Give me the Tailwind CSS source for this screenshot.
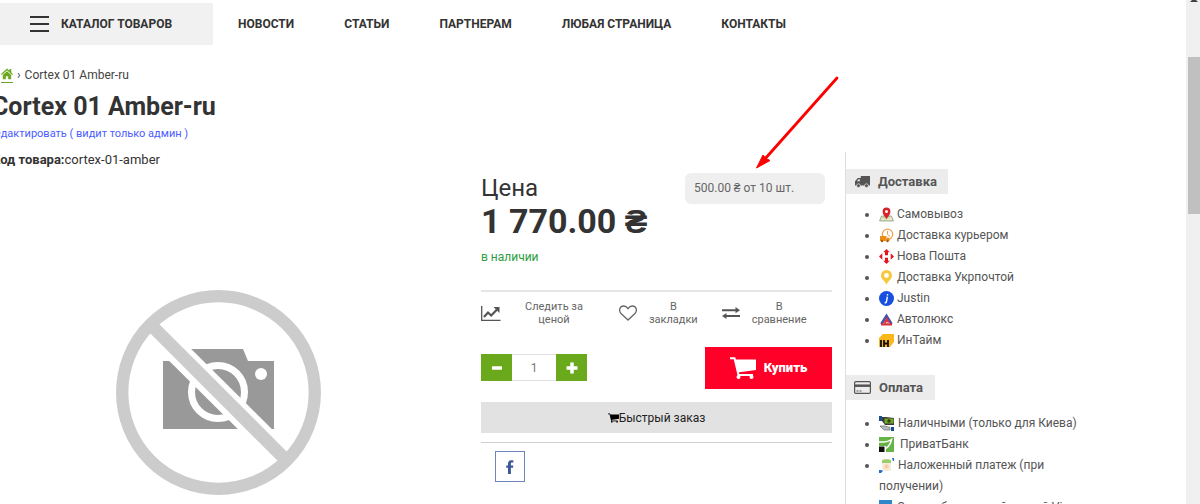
<!DOCTYPE html>
<html lang="ru">
  <head>
    <meta charset="UTF-8" />
    <meta name="viewport" content="width=device-width, initial-scale=1.0" />
    <title>Cortex 01 Amber-ru</title>
    <script src="https://cdn.jsdelivr.net/npm/@tailwindcss/browser@4"></script>
  </head>
  <body class="flex h-screen overflow-hidden bg-white font-[Roboto,sans-serif] text-[#333]">
    <div class="min-w-0 flex-1 overflow-hidden">
      <!-- Меню -->
      <header class="flex items-center pt-[3px]">
        <button class="flex h-[42px] w-[213px] items-center gap-3 bg-[#f1f1f1] pl-[30px] text-xs font-bold">
          <svg class="h-4 w-[19px]" viewBox="0 0 19 16" fill="none" stroke="#333" stroke-width="2">
            <path d="M0 1h19M0 8h19M0 15h19" />
          </svg>
          КАТАЛОГ ТОВАРОВ
        </button>
        <nav class="flex gap-[50px] pl-[25px] text-xs font-bold">
          <a href="#">НОВОСТИ</a>
          <a href="#">СТАТЬИ</a>
          <a href="#">ПАРТНЕРАМ</a>
          <a href="#">ЛЮБАЯ СТРАНИЦА</a>
          <a href="#">КОНТАКТЫ</a>
        </nav>
      </header>

      <!-- Хлебные крошки и заголовок -->
      <div class="flex items-center gap-1 pt-[22px] pl-px text-xs leading-4 text-[#444]">
        <a href="#" aria-label="Главная" class="border-b border-[#6aa81c] pb-px">
          <svg class="h-3.5 w-3" viewBox="0 0 12 14" fill="#6aa81c">
            <path d="M6 1.500 0 7l.8.9L6 3.300l5.200 4.600.8-.9-1.700-1.600V2H8.500v1.800z" />
            <path d="M6 4.300 1.800 8v4.300h3V9.200h2.400v3.100h3V8z" />
          </svg>
        </a>
        <span>›</span>
        <span>Cortex 01 Amber-ru</span>
      </div>
      <h1 class="-ml-2 pt-2 text-[25px] leading-8 font-bold">Cortex 01 Amber-ru</h1>
      <a href="#" class="-ml-3 block pt-[3px] text-[11px] leading-4 text-[#4a5cff]">Редактировать ( видит только админ )</a>

      <main class="grid grid-cols-[481fr_364fr_341fr] pt-2.5">
        <section class="min-w-0">
          <p class="-ml-2 text-[13px] leading-4"><b>Код товара:</b>cortex-01-amber</p>
          <svg class="mt-[122px] ml-[116px] h-[206px] w-[206px]" viewBox="0 0 206 206" role="img" aria-label="Нет фото">
            <path fill="#999" d="M47 71h20V59h60l5 12h26v68H47z" />
            <circle cx="102" cy="102" r="26.500" fill="#999" stroke="#fff" stroke-width="7" />
            <circle cx="145" cy="84" r="6" fill="#fff" />
            <path stroke="#fff" stroke-width="24" d="m38 39 128 127" />
            <circle cx="102.500" cy="102.500" r="96.300" fill="none" stroke="#ccc" stroke-width="12.300" />
            <path stroke="#ccc" stroke-width="13" d="m36 36 132 132" />
          </svg>
        </section>

        <!-- Цена и покупка -->
        <section class="min-w-0 pt-[21px] pr-[13px]">
          <div class="flex items-start justify-between pr-[7px]">
            <div>
              <p class="text-2xl leading-[30px]">Цена</p>
              <p class="text-[34px] leading-9 font-bold">1 770.00 ₴</p>
            </div>
            <div class="relative h-[31px] w-[140px] rounded-md bg-[#efefef] px-[9px] text-xs leading-[31px] text-[#666]">
              500.00 ₴ от 10 шт.
              <svg class="absolute -top-[99px] left-[67px] h-24 w-[90px]" viewBox="0 0 90 96">
                <path stroke="red" stroke-width="2.800" stroke-linecap="round" d="M85 4 12 86" />
                <path fill="red" d="m4.500 94 6.500-13 3 3.500 4 2z" stroke="red" stroke-linejoin="round" />
              </svg>
            </div>
          </div>
          <p class="pt-2.5 text-xs leading-4 text-[#2e9e40]">в наличии</p>

          <div class="mt-[25px] flex items-center border-t-2 border-[#e6e6e6] pt-2 text-center text-[11px] leading-[13px] text-[#666]">
            <button class="flex items-center gap-6">
              <svg class="h-[15px] w-5" viewBox="0 0 20 15" fill="none" stroke="#555">
                <path d="M.7 0v14.300H19.500" stroke-width="1.300" />
                <path d="m3 11 4-4.500 3.200 3L16 3.500" stroke-width="2.200" />
                <path fill="#555" stroke="none" d="M12.500 1H18.500V7z" />
              </svg>
              <span>Следить за<br />ценой</span>
            </button>
            <button class="ml-9 flex items-center gap-3">
              <svg class="h-4 w-[18px]" viewBox="0 0 18 16" fill="none" stroke="#666" stroke-width="1.300">
                <path d="M9 15 1.800 8.200C-.6 5.500.8 1 4.700 1 7 1 8.200 2.400 9 3.600 9.800 2.400 11 1 13.300 1c3.900 0 5.300 4.500 2.900 7.200z" />
              </svg>
              <span>В<br />закладки</span>
            </button>
            <button class="ml-6 flex items-center gap-3">
              <svg class="h-3 w-[18px]" viewBox="0 0 18 12" fill="#555">
                <path d="M0 2.200h13.500V0L18 3.200l-4.500 3V4.200H0zM18 10H4.500v2L0 9l4.500-3.100V8H18z" />
              </svg>
              <span>В<br />сравнение</span>
            </button>
          </div>

          <div class="mt-[21px] flex items-start justify-between">
            <div class="mt-[7px] flex h-[27px]">
              <button aria-label="Меньше" class="flex w-[31px] items-center justify-center bg-[#6aa81c]">
                <svg class="h-3 w-3" viewBox="0 0 12 12"><path stroke="#fff" stroke-width="3.500" d="M1 6h10" /></svg>
              </button>
              <input type="text" value="1" aria-label="Количество" class="w-11 border-y border-[#e0e0e6] text-center text-xs text-[#777]" />
              <button aria-label="Больше" class="flex w-[31px] items-center justify-center bg-[#6aa81c]">
                <svg class="h-3 w-3" viewBox="0 0 12 12"><path stroke="#fff" stroke-width="3.500" d="M.5 6h11M6 .5v11" /></svg>
              </button>
            </div>
            <button class="flex h-[42px] w-[127px] items-center justify-center gap-2 bg-[#ff0028] text-[13px] font-black text-white">
              <svg class="h-[22px] w-[26px]" viewBox="0 0 26 22" fill="none" stroke="#fff">
                <path d="M0 1.200h4.500L8.500 18H23" stroke-width="2" />
                <path fill="#fff" stroke="none" d="M5 2.500H26v10.500L7.500 15.500z" />
                <circle cx="8.500" cy="20" r="2" fill="#fff" stroke="none" />
                <circle cx="21.500" cy="20" r="2" fill="#fff" stroke="none" />
              </svg>
              Купить
            </button>
          </div>

          <button class="mt-[13px] flex h-[31px] w-full items-center justify-center bg-[#e2e2e2] text-xs text-[#222]">
            <svg class="h-2.5 w-[11px]" viewBox="0 0 26 22" fill="none" stroke="#000">
              <path d="M0 1.200h4.500L8.500 18H23" stroke-width="2" />
              <path fill="#000" stroke="none" d="M5 2.500H26v10.500L7.500 15.500z" />
              <circle cx="9" cy="20" r="2" fill="#000" stroke="none" />
              <circle cx="21.500" cy="20" r="2" fill="#000" stroke="none" />
            </svg>
            Быстрый заказ
          </button>

          <div class="mt-[9px] border-t border-[#d0d0d0] pt-2 pl-3.5">
            <a href="#" aria-label="Facebook" class="flex h-[31px] w-[30px] items-center justify-center border border-[#6f86bb]">
              <svg class="h-3.5 w-2" viewBox="0 0 8 14" fill="#3b5998">
                <path d="M2 14V7.800H.2V5.400H2V3.600C2 1.400 3.300.2 5.300.2c.9 0 1.700.1 2.100.2v2.100H6.200c-1.100 0-1.300.5-1.300 1.300v1.600h2.400L7 7.800H4.900V14z" />
              </svg>
            </a>
          </div>
        </section>

        <!-- Доставка и оплата -->
        <aside class="min-w-0 border-l border-[#ddd] pt-[17px] text-xs text-[#555]">
          <h2 class="flex h-[25px] w-[102px] items-center gap-2 bg-[#ececec] pl-[9px] text-[13px] font-bold">
            <svg class="h-3 w-[15px]" viewBox="0 0 15 12" fill="#555">
              <path d="M5.800 0H15v9.500H0V5.200L2.800 2h3zM2 5.300h2.800v-2H3.500z" fill-rule="evenodd" />
              <circle cx="3.500" cy="9.700" r="1.900" stroke="#ececec" stroke-width=".7" />
              <circle cx="11.500" cy="9.700" r="1.900" stroke="#ececec" stroke-width=".7" />
            </svg>
            Доставка
          </h2>
          <ul class="list-disc pt-2.5 pl-[33px] leading-[21px]">
            <li>
              <svg class="inline h-[15px] w-[15px]" viewBox="0 0 15 15">
                <path fill="#c9dcb4" stroke="#8c9a80" stroke-width=".7" d="M2.500 9h10l2 5H.5z" />
                <path fill="#f3e9c8" d="m3 11 4 2 5-3 1 3H2z" />
                <path fill="#d8232a" d="M7.500 12C5 8.500 3.600 7 3.600 4.400a3.900 3.900 0 0 1 7.800 0C11.400 7 10 8.500 7.500 12z" />
                <circle cx="7.500" cy="4.400" r="1.500" fill="#fff" />
              </svg>
              Самовывоз
            </li>
            <li>
              <svg class="inline h-[15px] w-[15px]" viewBox="0 0 15 15">
                <circle cx="8.500" cy="6.300" r="5.200" fill="#fff" stroke="#f3a24a" stroke-width="1.300" />
                <path fill="none" stroke="#f3a24a" d="M8.500 3v3.500l2.500 2" />
                <path fill="#ee8d16" d="M1 8h6.500v5H1zM8 9.500h1.500L10.500 11v2H8z" />
                <circle cx="3" cy="13" r="1.200" fill="#a65b08" />
                <circle cx="8.500" cy="13" r="1.200" fill="#a65b08" />
              </svg>
              Доставка курьером
            </li>
            <li>
              <svg class="inline h-[15px] w-[15px]" viewBox="0 0 15 15" fill="#e5141c">
                <path d="m7.500 0 3.200 3.300H9v2.900H6V3.300H4.300zM7.500 15l3.200-3.300H9V8.800H6v2.900H4.300zM0 7.500l3.300-3.300v6.600zM15 7.500l-3.300-3.300v6.600z" />
              </svg>
              Нова Пошта
            </li>
            <li>
              <svg class="inline h-[15px] w-[15px]" viewBox="0 0 15 15">
                <path fill="#f8c83c" d="M7.500 15C7 11.500 2 9.700 2 5.500a5.500 5.500 0 0 1 11 0c0 4.200-5 6-5.500 9.500z" />
                <circle cx="7.500" cy="5.500" r="2.400" fill="#fff" />
              </svg>
              Доставка Укрпочтой
            </li>
            <li>
              <svg class="inline h-[15px] w-[15px]" viewBox="0 0 15 15">
                <circle cx="7.500" cy="7.500" r="7.500" fill="#174fe0" />
                <path fill="none" stroke="#fff" stroke-width="1.400" d="M8.300 5.700 7.500 10.500q-.3 1.500-1.800 1.300M8.500 3v1.500" />
              </svg>
              Justin
            </li>
            <li>
              <svg class="inline h-[15px] w-[15px]" viewBox="0 0 15 15" fill="none">
                <path stroke="#4a4fa5" stroke-width="2.500" d="M2.300 12 7.500 3.800 12.600 12" />
                <path stroke="#d9303c" stroke-width="2.200" d="M2 12.300h11M5.500 11 8 7.500l1.800 3" />
              </svg>
              Автолюкс
            </li>
            <li>
              <svg class="inline h-[15px] w-[15px]" viewBox="0 0 15 15">
                <path fill="#fbb81b" d="M4 1h11v8l-4 5H0V5z" />
                <path stroke="#111" stroke-width="1.800" d="M2 7v7M5 7v7M9 7v7M5 10.500h4" />
              </svg>
              ИнТайм
            </li>
          </ul>

          <h2 class="mt-6 flex h-[25px] w-[89px] items-center gap-2 bg-[#ececec] pl-2 text-[13px] font-bold">
            <svg class="h-[13px] w-[17px]" viewBox="0 0 17 13">
              <rect x=".6" y=".6" width="15.800" height="11.800" rx="1.200" fill="none" stroke="#555" stroke-width="1.200" />
              <path stroke="#555" stroke-width="2.500" d="M0 4.700h17" />
              <path stroke="#555" stroke-dasharray="2 1" d="M2.500 10h6" />
            </svg>
            Оплата
          </h2>
          <ul class="list-disc pt-[13px] pl-[33px] leading-[21px]">
            <li class="w-[205px]">
              <svg class="inline h-[15px] w-4" viewBox="0 0 16 15">
                <path fill="#174f91" d="M0 0h3v5H0z" />
                <path fill="#3d3a33" d="M3 1h4l8 1v7H6L3 5z" />
                <path fill="#73a52c" d="M5.500 2.500h9v5h-9z" />
                <circle cx="10" cy="5" r="1.700" fill="#28430f" />
                <path fill="#b9bcc0" stroke="#555" stroke-width=".6" d="M1 10h5l5 1.500V14H5z" />
                <path fill="#174f91" d="M12 11h3v4h-3z" />
              </svg>
              Наличными (только для Киева)
            </li>
            <li class="w-[205px]">
              <svg class="inline h-[15px] w-[15px]" viewBox="0 0 15 15">
                <path fill="#66b544" d="M0 0h15v15H7V9H0z" />
                <path fill="none" stroke="#fff" stroke-width="1.500" d="M0 5h4.500Q9 5 12.500 2.500 11.500 8 7 11.500" />
                <path fill="#111" d="M0 9.500h5.500V15H0z" />
              </svg>
              &nbsp;ПриватБанк
            </li>
            <li class="w-[205px]">
              <svg class="inline h-[15px] w-4" viewBox="0 0 16 15">
                <path fill="#f5edd9" d="M3 1h9v12H3z" />
                <path fill="#98cf68" d="M3 2.500Q7.500 0 12 2.500V5H3z" />
                <circle cx="7.500" cy="8.500" r="2.300" fill="#f8cfaa" />
                <path fill="#1d6ed8" d="M13 0h2v3h-1zM0 12h2l2 1-2 2H0z" />
              </svg>
              Наложенный платеж (при получении)
            </li>
            <li class="w-[205px]">
              <svg class="inline h-[15px] w-[15px]" viewBox="0 0 15 15">
                <path fill="#2f86c9" d="M0 0h13v11H0z" />
                <path fill="#f2bd4b" d="M2 4h5v4H2z" />
              </svg>
              Оплата банковской картой Visa
            </li>
          </ul>
        </aside>
      </main>
    </div>

    <!-- Полоса прокрутки -->
    <div class="w-3.5 shrink-0 bg-[#f0f0f0] pl-0.5">
      <svg class="mx-auto h-0.5 w-2" viewBox="0 0 8 2" fill="#444"><path d="M2 0h4l2 2H0z" /></svg>
      <div class="mt-[55px] h-[157px] bg-[#c0c0c0]"></div>
    </div>
  </body>
</html>
